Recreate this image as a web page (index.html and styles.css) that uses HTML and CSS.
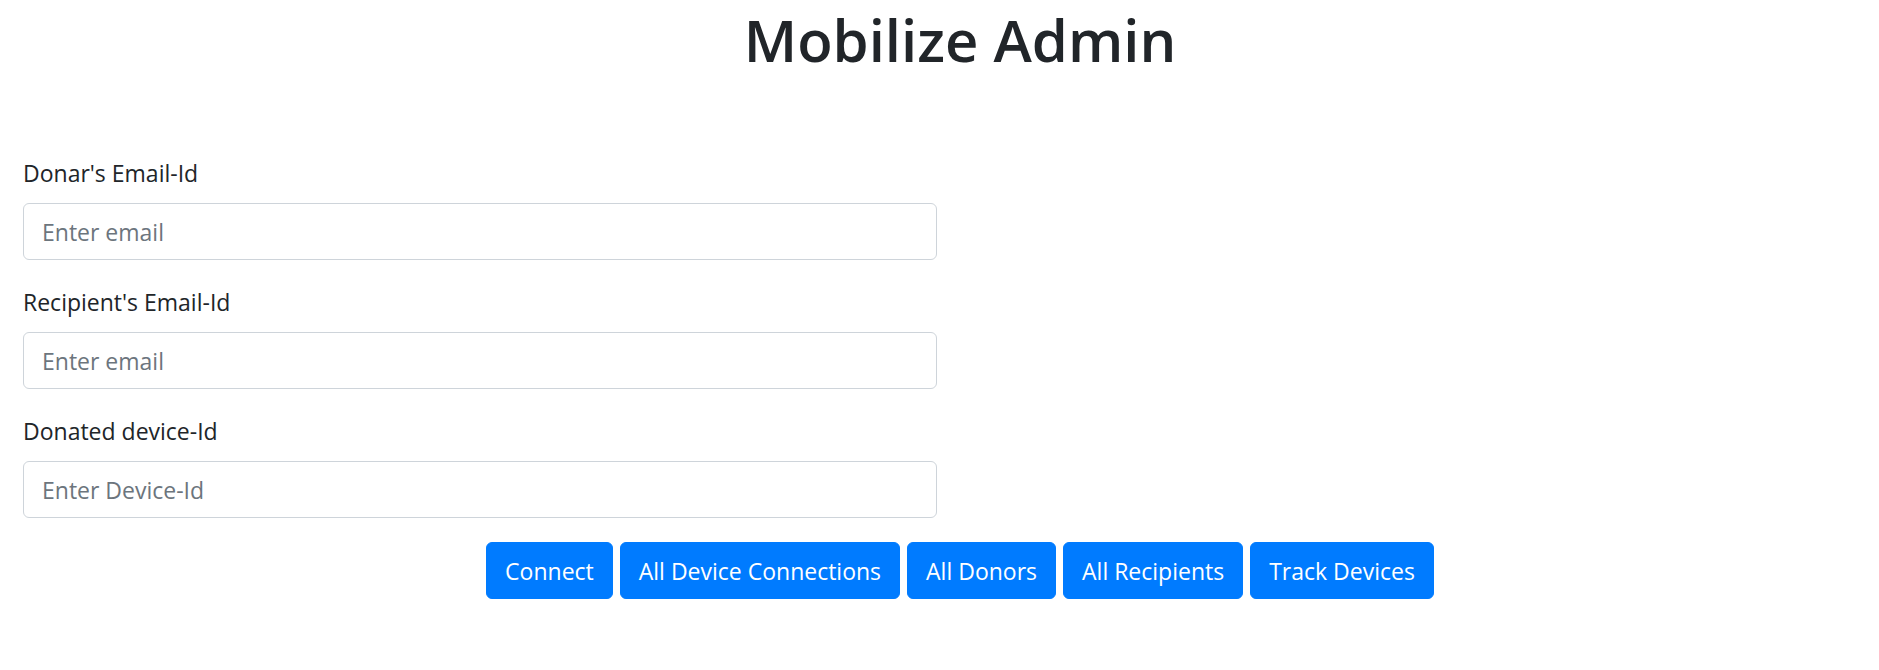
FILE: index.html
```html
<!DOCTYPE html>
<html>
<head>
<meta charset="utf-8">
<title>Mobilize Admin</title>
<link rel="stylesheet" href="styles.css">
</head>
<body>
<div class="page">
  <h1 class="title">Mobilize Admin</h1>
  <form class="form">
    <div class="form-group">
      <label class="label">Donar's Email-Id</label>
      <input class="input" type="email" placeholder="Enter email">
    </div>
    <div class="form-group">
      <label class="label">Recipient's Email-Id</label>
      <input class="input" type="email" placeholder="Enter email">
    </div>
    <div class="form-group">
      <label class="label">Donated device-Id</label>
      <input class="input" type="text" placeholder="Enter Device-Id">
    </div>
  </form>
  <div class="actions">
    <button class="btn">Connect</button>
    <button class="btn">All Device Connections</button>
    <button class="btn">All Donors</button>
    <button class="btn">All Recipients</button>
    <button class="btn">Track Devices</button>
  </div>
</div>
</body>
</html>
```

FILE: styles.css
```css
html, body {
  margin: 0;
  padding: 0;
  background: #fff;
}
body {
  font-family: "Open Sans", "Noto Sans", sans-serif;
  color: #212529;
  font-size: 23px;
  line-height: 36px;
}
.page {
  width: 1879px;
}
.title {
  margin: 0 0 0 41px;
  font-size: 58px;
  line-height: normal;
  font-weight: 600;
  text-align: center;
  color: #212529;
}
.form {
  margin: 76px 0 0 23px;
  width: 914px;
}
.form-group {
  display: flex;
  flex-direction: column;
  margin-bottom: 24px;
}
.label {
  margin-bottom: 12px;
  line-height: 36px;
}
.input {
  box-sizing: border-box;
  height: 57px;
  width: 914px;
  padding: 9px 18px;
  border: 1.5px solid #ced4da;
  border-radius: 6px;
  font-family: inherit;
  font-size: 23px;
  color: #495057;
  outline: none;
}
.input::placeholder {
  color: #6c757d;
}
.actions {
  display: flex;
  justify-content: center;
  gap: 7px;
  margin-left: 41px;
}
.btn {
  box-sizing: border-box;
  height: 57px;
  padding: 9px 18px;
  border: 1.5px solid #007bff;
  background: #007bff;
  color: #fff;
  border-radius: 6px;
  font-family: inherit;
  font-size: 23px;
  line-height: 36px;
}
```
